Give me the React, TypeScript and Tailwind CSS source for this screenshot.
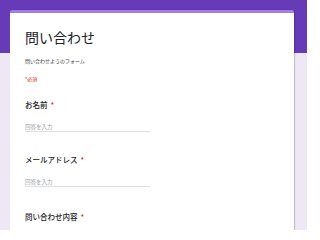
export default function App() {
  const font = { fontFamily: '"Noto Sans CJK JP", "Noto Sans", sans-serif' };
  return (
    <div
      className="w-[307px] h-[230px] overflow-hidden bg-[linear-gradient(to_bottom,#673ab7_53px,#ede7f6_53px)] pt-[10px] pl-[10px]"
      style={font}
    >
      <div className="w-[284px] h-[240px] bg-white border-t-[3px] border-[#a27fe6] rounded-t-[2px] shadow-[1px_0_1px_rgba(0,0,0,0.2)] pl-[15px] pt-[14px]">
        <div className="text-[14px] leading-[20px] text-[#202124]">問い合わせ</div>
        <div className="mt-[10px] text-[5px] leading-[8px] text-[#3c4043]">問い合わせようのフォーム</div>
        <div className="mt-[10px] text-[5px] leading-[8px] text-[#d93025]">*必須</div>

        <div className="mt-[17px] text-[7.5px] leading-[10px] font-medium text-[#202124]">
          お名前<span className="ml-[3px] text-[#d93025]">*</span>
        </div>
        <div className="mt-[13px] w-[125px] border-b border-[#e0e0e0] text-[5.5px] leading-[8px] text-[#9aa0a6]">回答を入力</div>

        <div className="mt-[23px] text-[7.5px] leading-[10px] font-medium text-[#202124]">
          メールアドレス<span className="ml-[3px] text-[#d93025]">*</span>
        </div>
        <div className="mt-[13px] w-[125px] border-b border-[#e0e0e0] text-[5.5px] leading-[8px] text-[#9aa0a6]">回答を入力</div>

        <div className="mt-[25px] text-[7.5px] leading-[10px] font-medium text-[#202124]">
          問い合わせ内容<span className="ml-[3px] text-[#d93025]">*</span>
        </div>
      </div>
    </div>
  );
}
